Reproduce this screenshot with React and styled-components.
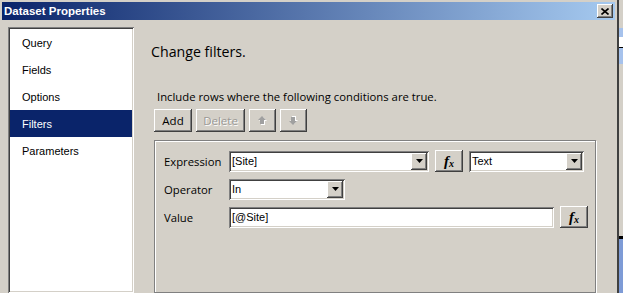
import React from "react";
import styled, { createGlobalStyle } from "styled-components";

const GlobalStyle = createGlobalStyle`
  html, body { margin: 0; padding: 0; background: #d4d0c8; }
  body { font-family: "Liberation Sans", Arial, sans-serif; }
  * { box-sizing: border-box; }
`;

const raised = `
  background: #d4d0c8;
  box-shadow: inset -1px -1px 0 #404040, inset 1px 1px 0 #ffffff,
    inset -2px -2px 0 #808080, inset 2px 2px 0 #d4d0c8;
`;

const sunken = `
  box-shadow: inset 1px 1px 0 #808080, inset -1px -1px 0 #ffffff,
    inset 2px 2px 0 #404040, inset -2px -2px 0 #d4d0c8;
`;

const Page = styled.div`
  display: flex;
  width: 623px;
  height: 293px;
  overflow: hidden;
`;

const Window = styled.div`
  flex: 0 0 619px;
  display: flex;
  flex-direction: column;
  background: #d4d0c8;
  padding: 2px 2px 0 2px;
  border-right: 2px solid #404040;
`;

const TitleBar = styled.div`
  height: 18px;
  flex: 0 0 18px;
  display: flex;
  align-items: center;
  justify-content: space-between;
  padding: 0 2px 0 2px;
  background: linear-gradient(to right, #0a246a, #a6caf0);
`;

const TitleText = styled.span`
  color: #fff;
  font-weight: bold;
  font-size: 11.5px;
  font-family: "Liberation Sans", Arial, sans-serif;
`;

const CloseButton = styled.div`
  width: 16px;
  height: 14px;
  display: flex;
  align-items: center;
  justify-content: center;
  ${raised}
`;

const Body = styled.div`
  flex: 1;
  display: flex;
  padding: 7px 0 0 6px;
  min-height: 0;
`;

const Sidebar = styled.div`
  flex: 0 0 126px;
  background: #fff;
  padding: 2px;
  ${sunken}
  display: flex;
  flex-direction: column;
`;

const NavItem = styled.div`
  height: 27px;
  display: flex;
  align-items: center;
  padding-left: 12px;
  font-size: 11px;
  font-family: "Liberation Sans", Arial, sans-serif;
  color: ${(p) => (p.$active ? "#ffffff" : "#000000")};
  background: ${(p) => (p.$active ? "#0a246a" : "transparent")};
`;

const Main = styled.div`
  flex: 1;
  display: flex;
  flex-direction: column;
  align-items: flex-start;
  padding-left: 17px;
`;

const Heading = styled.div`
  margin-top: 15px;
  line-height: 20px;
  font-size: 14.2px;
  font-family: "Open Sans", "Noto Sans", sans-serif;
  color: #000;
`;

const Intro = styled.div`
  margin-top: 27px;
  margin-left: 6px;
  line-height: 16px;
  font-size: 11.3px;
  font-family: "Open Sans", "Noto Sans", sans-serif;
  color: #000;
`;

const ButtonRow = styled.div`
  margin-top: 4px;
  margin-left: 3px;
  display: flex;
  gap: 4px;
`;

const ToolButton = styled.div`
  width: ${(p) => p.$w}px;
  height: 23px;
  display: flex;
  align-items: center;
  justify-content: center;
  font-size: 11.5px;
  font-family: "Open Sans", "Noto Sans", sans-serif;
  color: ${(p) => (p.$disabled ? "#9a9894" : "#000")};
  text-shadow: ${(p) => (p.$disabled ? "1px 1px 0 #ffffff" : "none")};
  ${raised}
`;

const FilterBox = styled.div`
  margin-top: 8px;
  margin-left: 3px;
  width: 442px;
  height: 200px;
  border: 1px solid #808080;
  box-shadow: inset 1px 1px 0 #ffffff, 1px 1px 0 #ffffff;
  padding: 9px 2px 9px 9px;
  display: flex;
  flex-direction: column;
  gap: 6px;
`;

const FieldRow = styled.div`
  display: flex;
  align-items: center;
  height: 22px;
`;

const Label = styled.div`
  flex: 0 0 65px;
  font-size: 11.3px;
  font-family: "Open Sans", "Noto Sans", sans-serif;
  color: #000;
`;

const Field = styled.div`
  flex: 0 0 ${(p) => p.$w}px;
  height: 21px;
  background: #fff;
  padding: 2px;
  display: flex;
  ${sunken}
`;

const FieldText = styled.div`
  flex: 1;
  padding-left: 1px;
  line-height: 17px;
  font-size: 11px;
  font-family: "Liberation Sans", Arial, sans-serif;
  color: #000;
  white-space: nowrap;
  overflow: hidden;
`;

const DropButton = styled.div`
  flex: 0 0 16px;
  height: 17px;
  display: flex;
  align-items: center;
  justify-content: center;
  ${raised}
`;

const FxButton = styled.div`
  flex: 0 0 28px;
  margin: 0 6px;
  height: 22px;
  display: flex;
  align-items: center;
  justify-content: center;
  ${raised}
`;

const FxGlyph = styled.span`
  font-family: "Liberation Serif", "Times New Roman", serif;
  font-style: italic;
  font-weight: bold;
  font-size: 15px;
  line-height: 1;
  color: #000;
  & > sub {
    font-size: 10px;
    vertical-align: -1px;
  }
`;

const Backdrop = styled.div`
  flex: 1;
  display: flex;
  flex-direction: column;
  background: #d4d0c8;
`;

const BackBlock = styled.div`
  flex: 0 0 ${(p) => p.$h}px;
  background: ${(p) => p.$c};
`;

const DownArrow = () => (
  <svg width="7" height="4" viewBox="0 0 7 4">
    <polygon points="0,0 7,0 3.5,4" fill="#000" />
  </svg>
);

const CloseGlyph = () => (
  <svg width="8" height="7" viewBox="0 0 8 7">
    <path d="M0.5 0.5 L7.5 6.5 M7.5 0.5 L0.5 6.5" stroke="#000" strokeWidth="1.6" />
  </svg>
);

const BlockArrow = ({ down }) => (
  <svg width="9" height="9" viewBox="0 0 9 9" style={down ? { transform: "scaleY(-1)" } : undefined}>
    <polygon points="5,1 9,5 7,5 7,9 3,9 3,5 1,5" fill="#ffffff" />
    <polygon points="4,0 8,4 6,4 6,8 2,8 2,4 0,4" fill="#a0a0a0" />
  </svg>
);

const Fx = () => (
  <FxGlyph>
    f<sub>x</sub>
  </FxGlyph>
);

const Combo = ({ w, value }) => (
  <Field $w={w}>
    <FieldText>{value}</FieldText>
    <DropButton>
      <DownArrow />
    </DropButton>
  </Field>
);

const navItems = ["Query", "Fields", "Options", "Filters", "Parameters"];

export default function App() {
  return (
    <>
      <GlobalStyle />
      <Page>
        <Window>
          <TitleBar>
            <TitleText>Dataset Properties</TitleText>
            <CloseButton>
              <CloseGlyph />
            </CloseButton>
          </TitleBar>
          <Body>
            <Sidebar>
              {navItems.map((n) => (
                <NavItem key={n} $active={n === "Filters"}>
                  {n}
                </NavItem>
              ))}
            </Sidebar>
            <Main>
              <Heading>Change filters.</Heading>
              <Intro>Include rows where the following conditions are true.</Intro>
              <ButtonRow>
                <ToolButton $w={38}>Add</ToolButton>
                <ToolButton $w={49} $disabled>
                  Delete
                </ToolButton>
                <ToolButton $w={27}>
                  <BlockArrow />
                </ToolButton>
                <ToolButton $w={27}>
                  <BlockArrow down />
                </ToolButton>
              </ButtonRow>
              <FilterBox>
                <FieldRow>
                  <Label>Expression</Label>
                  <Combo w={200} value="[Site]" />
                  <FxButton>
                    <Fx />
                  </FxButton>
                  <Combo w={115} value="Text" />
                </FieldRow>
                <FieldRow>
                  <Label>Operator</Label>
                  <Combo w={116} value="In" />
                </FieldRow>
                <FieldRow>
                  <Label>Value</Label>
                  <Field $w={325}>
                    <FieldText>[@Site]</FieldText>
                  </Field>
                  <FxButton>
                    <Fx />
                  </FxButton>
                </FieldRow>
              </FilterBox>
            </Main>
          </Body>
        </Window>
        <Backdrop>
          <BackBlock $h={28} $c="#d4d0c8" />
          <BackBlock $h={9} $c="#a6c2ec" />
          <BackBlock $h={10} $c="#ffffff" />
          <BackBlock $h={1} $c="#000000" />
          <BackBlock $h={16} $c="#a6c2ec" />
          <BackBlock $h={172} $c="#d4d0c8" />
          <BackBlock $h={3} $c="#000000" />
          <BackBlock $h={54} $c="#7e9bd6" />
        </Backdrop>
      </Page>
    </>
  );
}
